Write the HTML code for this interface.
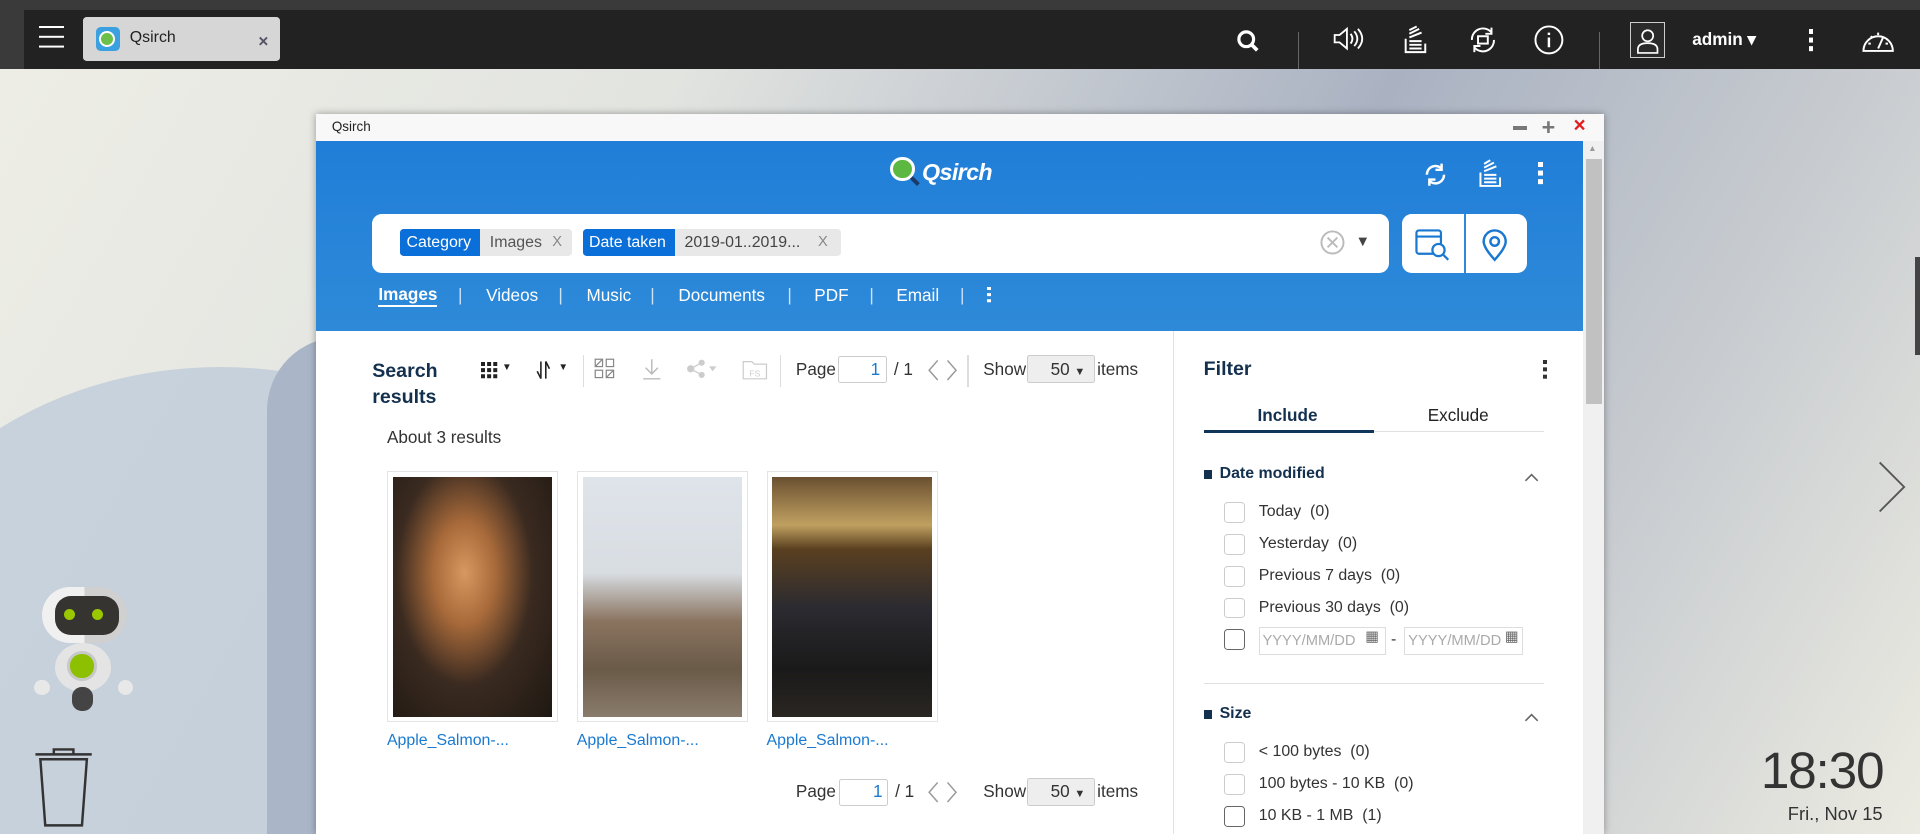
<!DOCTYPE html>
<html><head><meta charset="utf-8"><style>
*{box-sizing:border-box;margin:0;padding:0}
html,body{width:1920px;height:834px;overflow:hidden;font-family:"Liberation Sans",Arial,sans-serif}
#w{zoom:1.22449;width:1568px;height:681px;position:relative;overflow:hidden;
background:linear-gradient(120deg,#eeeee6 0%,#e2e4e0 30%,#aab2c2 60%,#c8ccd0 80%,#ecebe2 100%)}
.a{position:absolute}
.t{position:absolute;white-space:nowrap}
.ic{position:absolute}
</style></head><body><div id="w">
<div class="a" style="left:-120px;top:300px;width:600px;height:500px;border-radius:50%;background:#b9c8d8;opacity:.7"></div>
<div class="a" style="left:218px;top:275px;width:120px;height:406px;border-radius:60px 0 0 0;background:#aab6c8"></div>
<div class="a" style="left:0;top:0;width:1568px;height:8px;background:#3a3a3a"></div>
<div class="a" style="left:0;top:8px;width:1568px;height:48px;background:#222"></div>
<div class="a" style="left:0;top:8px;width:20px;height:48px;background:#3a3a3a"></div>
<div class="a" style="left:32px;top:21px;width:20px;height:2px;background:#fff;box-shadow:0 8px 0 #fff,0 16px 0 #fff"></div>
<div class="a" style="left:68px;top:14px;width:161px;height:36px;background:#d6d6d6;border-radius:3px"></div>
<div class="a" style="left:78px;top:22px;width:20px;height:20px;border-radius:4px;background:#3aa0e0"></div>
<div class="a" style="left:81px;top:25px;width:13px;height:13px;border-radius:50%;background:#6cc04a;border:2px solid #fff"></div>
<div class="t" style="left:106px;top:24px;font-size:13px;color:#222">Qsirch</div>
<div class="t" style="left:211px;top:25px;font-size:14px;color:#556;font-weight:bold">×</div>
<svg class="ic" style="left:1008px;top:22px" width="22" height="22" viewBox="0 0 22 22"><circle cx="10" cy="10" r="6" fill="none" stroke="#fff" stroke-width="2.6"/><path d="M14 14l5 5" stroke="#fff" stroke-width="3"/></svg>
<div class="a" style="left:1060px;top:26px;width:1px;height:30px;background:#666"></div>
<svg class="ic" style="left:1087px;top:20px" width="28" height="24" viewBox="0 0 28 24" fill="none" stroke="#fff" stroke-width="1.5"><path d="M3 9h4l6-5v16l-6-5H3z"/><path d="M16 8q3 4 0 8M19 6q5 6 0 12M22 4q7 8 0 16"/></svg>
<svg class="ic" style="left:1145px;top:20px" width="22" height="26" viewBox="0 0 22 26" fill="none" stroke="#fff" stroke-width="1.6"><path d="M3 12v11h16v-7M6 14h10M6 17h10M6 20h10M6 11l10-4M6 8l8-4M6 5l6-3"/></svg>
<svg class="ic" style="left:1198px;top:20px" width="26" height="26" viewBox="0 0 26 26" fill="none" stroke="#fff" stroke-width="1.6"><path d="M4 13a9 9 0 0 1 16-6M22 13a9 9 0 0 1-16 6"/><path d="M20 3v5h-5M6 23v-5h5"/><rect x="9" y="10" width="8" height="6"/></svg>
<svg class="ic" style="left:1252px;top:20px" width="26" height="26" viewBox="0 0 26 26" fill="none" stroke="#fff" stroke-width="1.6"><circle cx="13" cy="13" r="11"/><path d="M13 11v8M13 7v2" stroke-width="2"/></svg>
<div class="a" style="left:1306px;top:26px;width:1px;height:30px;background:#666"></div>
<div class="a" style="left:1331px;top:18px;width:29px;height:29px;border:1.5px solid #ccc;background:#2a2a2a"></div>
<svg class="ic" style="left:1334px;top:21px" width="24" height="24" viewBox="0 0 24 24" fill="none" stroke="#fff" stroke-width="1.4"><circle cx="12" cy="8" r="4.5"/><path d="M4 22v-3q0-5 8-5t8 5v3z"/></svg>
<div class="t" style="left:1382px;top:24px;font-size:14px;font-weight:bold;color:#fff">admin ▾</div>
<div class="a" style="left:1477px;top:24px;width:4px;height:4px;background:#fff;box-shadow:0 7px 0 #fff,0 14px 0 #fff"></div>
<svg class="ic" style="left:1520px;top:20px" width="28" height="26" viewBox="0 0 28 26" fill="none" stroke="#fff" stroke-width="1.6"><path d="M2 22a12 12 0 1 1 24 0z"/><path d="M14 20l4-9M6 16h2M20 16h2M8 10l1 1M14 7v2"/></svg>
<!-- window -->
<div class="a" style="left:258px;top:93px;width:1052px;height:588px;background:#fff;box-shadow:0 0 6px rgba(0,0,0,.35)"></div>
<div class="a" style="left:258px;top:93px;width:1052px;height:22px;background:#f8f8f8"></div>
<div class="t" style="left:271px;top:97px;font-size:11px;color:#222">Qsirch</div>
<div class="a" style="left:1236px;top:103px;width:11px;height:3px;background:#777"></div>
<div class="t" style="left:1259px;top:93px;font-size:19px;font-weight:bold;color:#777">+</div>
<div class="t" style="left:1285px;top:93px;font-size:17px;font-weight:bold;color:#e02020">×</div>
<div class="a" style="left:258px;top:115px;width:1035px;height:155px;background:linear-gradient(#207ed8,#2e8ad8)"></div>
<div class="a" style="left:1293px;top:115px;width:17px;height:566px;background:#f0f0f0"></div>
<div class="a" style="left:1295px;top:130px;width:13px;height:200px;background:#c1c1c1"></div>
<div class="t" style="left:1297px;top:117px;font-size:7px;color:#999">▲</div>
<div class="a" style="left:727px;top:128px;width:20px;height:20px;border-radius:50%;background:#5cb840;border:3px solid #fff"></div>
<div class="a" style="left:743px;top:146px;width:8px;height:3px;background:#1b3a6a;transform:rotate(45deg)"></div>
<div class="t" style="left:753px;top:130px;font-size:19px;font-weight:bold;font-style:italic;color:#fff;letter-spacing:-0.5px">Qsirch</div>
<svg class="ic" style="left:1161px;top:131px" width="22" height="24" viewBox="0 0 22 24" fill="none" stroke="#fff" stroke-width="2"><path d="M4 12a7 7 0 0 1 12-5M18 12a7 7 0 0 1-12 5"/><path d="M16 3v5h-5M6 21v-5h5"/></svg>
<svg class="ic" style="left:1207px;top:130px" width="20" height="24" viewBox="0 0 20 24" fill="none" stroke="#fff" stroke-width="1.6"><path d="M2 11v11h16v-7M5 13h10M5 16h10M5 19h10M5 10l10-4M5 7l8-4M5 4l5-3"/></svg>
<div class="a" style="left:1256px;top:132px;width:4px;height:4px;background:#fff;box-shadow:0 7px 0 #fff,0 14px 0 #fff"></div>
<div class="a" style="left:304px;top:175px;width:830px;height:48px;background:#fff;border-radius:8px"></div>
<div class="a" style="left:327px;top:187px;width:140px;height:22px;background:#e8e8e8;border-radius:3px"></div>
<div class="a" style="left:327px;top:187px;width:65px;height:22px;background:#0a6fd8;border-radius:3px 0 0 3px"></div>
<div class="t" style="left:332px;top:191px;font-size:13px;color:#fff">Category</div>
<div class="t" style="left:400px;top:191px;font-size:13px;color:#555">Images</div>
<div class="t" style="left:451px;top:191px;font-size:12px;color:#888">X</div>
<div class="a" style="left:476px;top:187px;width:211px;height:22px;background:#e8e8e8;border-radius:3px"></div>
<div class="a" style="left:476px;top:187px;width:75px;height:22px;background:#0a6fd8;border-radius:3px 0 0 3px"></div>
<div class="t" style="left:481px;top:191px;font-size:13px;color:#fff">Date taken</div>
<div class="t" style="left:559px;top:191px;font-size:13px;color:#444">2019-01..2019...</div>
<div class="t" style="left:668px;top:191px;font-size:12px;color:#888">X</div>
<svg class="ic" style="left:1077px;top:187px" width="22" height="22" viewBox="0 0 22 22" fill="none" stroke="#bbb" stroke-width="1.6"><circle cx="11" cy="11" r="9"/><path d="M7 7l8 8M15 7l-8 8"/></svg>
<div class="t" style="left:1107px;top:191px;font-size:12px;color:#444">▼</div>
<div class="a" style="left:1145px;top:175px;width:102px;height:48px;background:#fff;border-radius:8px"></div>
<div class="a" style="left:1196px;top:175px;width:1px;height:48px;background:#2e8ad8"></div>
<svg class="ic" style="left:1155px;top:186px" width="30" height="28" viewBox="0 0 30 28" fill="none" stroke="#1a78d0" stroke-width="1.8"><rect x="2" y="2" width="20" height="19" rx="2"/><path d="M2 7h20"/><circle cx="20" cy="18" r="5" fill="#fff"/><path d="M24 22l4 4"/></svg>
<svg class="ic" style="left:1209px;top:186px" width="24" height="28" viewBox="0 0 24 28" fill="none" stroke="#1a78d0" stroke-width="2"><path d="M12 26Q3 16 3 11a9 9 0 0 1 18 0q0 5-9 15z"/><circle cx="12" cy="11" r="3.5"/></svg>
<div class="t" style="left:309px;top:233px;font-size:14px;font-weight:bold;color:#fff;border-bottom:2px solid #fff;line-height:16px">Images</div>
<div class="t" style="left:374px;top:233px;font-size:14px;color:#cfe3f7">|</div>
<div class="t" style="left:397px;top:233px;font-size:14px;color:#fff">Videos</div>
<div class="t" style="left:456px;top:233px;font-size:14px;color:#cfe3f7">|</div>
<div class="t" style="left:479px;top:233px;font-size:14px;color:#fff">Music</div>
<div class="t" style="left:531px;top:233px;font-size:14px;color:#cfe3f7">|</div>
<div class="t" style="left:554px;top:233px;font-size:14px;color:#fff">Documents</div>
<div class="t" style="left:643px;top:233px;font-size:14px;color:#cfe3f7">|</div>
<div class="t" style="left:665px;top:233px;font-size:14px;color:#fff">PDF</div>
<div class="t" style="left:710px;top:233px;font-size:14px;color:#cfe3f7">|</div>
<div class="t" style="left:732px;top:233px;font-size:14px;color:#fff">Email</div>
<div class="t" style="left:784px;top:233px;font-size:14px;color:#cfe3f7">|</div>
<div class="a" style="left:806px;top:234px;width:3px;height:3px;background:#fff;box-shadow:0 5px 0 #fff,0 10px 0 #fff"></div>
<div class="a" style="left:958px;top:270px;width:1px;height:411px;background:#e2e2e2"></div>
<div class="t" style="left:304px;top:292px;font-size:16px;font-weight:bold;color:#14304f;line-height:22px">Search<br>results</div>
<div class="a" style="left:393px;top:296px;width:3px;height:3px;background:#222;box-shadow:5px 0 #222,10px 0 #222,0 5px #222,5px 5px #222,10px 5px #222,0 10px #222,5px 10px #222,10px 10px #222"></div>
<div class="t" style="left:410px;top:296px;font-size:8px;color:#222">▼</div>
<svg class="ic" style="left:438px;top:293px" width="16" height="18" viewBox="0 0 16 18" fill="none" stroke="#222" stroke-width="1.3"><path d="M1 10l3 6V2M8 16V2l3 6"/></svg>
<div class="t" style="left:456px;top:296px;font-size:8px;color:#222">▼</div>
<div class="a" style="left:476px;top:290px;width:1px;height:26px;background:#ddd"></div>
<svg class="ic" style="left:485px;top:292px" width="18" height="18" viewBox="0 0 18 18" fill="none" stroke="#888" stroke-width="1"><rect x="1" y="1" width="6" height="6"/><rect x="10" y="1" width="6" height="6"/><rect x="1" y="10" width="6" height="6"/><rect x="10" y="10" width="6" height="6"/><path d="M1 7l6-6M10 16l6-6"/></svg>
<svg class="ic" style="left:524px;top:292px" width="16" height="18" viewBox="0 0 16 18" fill="none" stroke="#bbb" stroke-width="1.2"><path d="M8 1v12M3 8l5 5 5-5M1 17h14"/></svg>
<svg class="ic" style="left:561px;top:293px" width="26" height="16" viewBox="0 0 26 16" fill="#ccc"><circle cx="3" cy="8" r="3"/><circle cx="12" cy="3" r="2.5"/><circle cx="12" cy="13" r="2.5"/><path d="M3 8L12 3M3 8l9 5" stroke="#ccc"/><path d="M18 6h6l-3 4z"/></svg>
<svg class="ic" style="left:606px;top:292px" width="22" height="18" viewBox="0 0 22 18" fill="none" stroke="#ccc" stroke-width="1"><path d="M1 3h7l2 2h10v12H1z"/><text x="6" y="15" font-size="7" fill="#ccc" stroke="none" font-family="Liberation Sans">FS</text></svg>
<div class="a" style="left:637px;top:290px;width:1px;height:26px;background:#ddd"></div>
<div class="t" style="left:650px;top:293px;font-size:14px;color:#333">Page</div>
<div class="a" style="left:684px;top:291px;width:40px;height:22px;border:1px solid #ccc;border-radius:2px"></div>
<div class="t" style="left:711px;top:293px;font-size:14px;color:#1a7ad0">1</div>
<div class="t" style="left:730px;top:293px;font-size:14px;color:#333">/ 1</div>
<svg class="ic" style="left:754px;top:292px" width="32" height="20" viewBox="0 0 32 20" fill="none" stroke="#999" stroke-width="1.2"><path d="M12 2L5 10l7 8M20 2l7 8-7 8"/></svg>
<div class="a" style="left:790px;top:290px;width:1px;height:26px;background:#ddd"></div>
<div class="t" style="left:803px;top:293px;font-size:14px;color:#333">Show</div>
<div class="a" style="left:839px;top:290px;width:55px;height:23px;background:#eee;border:1px solid #ccc;border-radius:2px"></div>
<div class="t" style="left:858px;top:293px;font-size:14px;color:#333">50 <span style="font-size:9px">▼</span></div>
<div class="t" style="left:896px;top:293px;font-size:14px;color:#333">items</div>
<div class="t" style="left:316px;top:349px;font-size:14px;color:#333">About 3 results</div>
<div class="a" style="left:316px;top:385px;width:140px;height:205px;border:1px solid #e4e4e4;padding:4px">
<div style="width:100%;height:100%;background:radial-gradient(ellipse at 45% 40%,#d89860 0%,#a86a3a 25%,#3a2a20 55%,#1e1812 100%)"></div></div>
<div class="a" style="left:471px;top:385px;width:140px;height:205px;border:1px solid #e4e4e4;padding:4px">
<div style="width:100%;height:100%;background:linear-gradient(#dfe4ea 0%,#d8dde2 40%,#8a7460 60%,#6a5a48 80%,#8a7c6c 100%)"></div></div>
<div class="a" style="left:626px;top:385px;width:140px;height:205px;border:1px solid #e4e4e4;padding:4px">
<div style="width:100%;height:100%;background:linear-gradient(#6a5030 0%,#c0a060 20%,#5a4020 30%,#2a2a30 55%,#1a1a1a 80%,#2a2622 100%)"></div></div>
<div class="t" style="left:316px;top:598px;font-size:13px;color:#1a7ad0">Apple_Salmon-...</div>
<div class="t" style="left:471px;top:598px;font-size:13px;color:#1a7ad0">Apple_Salmon-...</div>
<div class="t" style="left:626px;top:598px;font-size:13px;color:#1a7ad0">Apple_Salmon-...</div>
<div class="t" style="left:650px;top:638px;font-size:14px;color:#333">Page</div>
<div class="a" style="left:685px;top:636px;width:40px;height:22px;border:1px solid #ccc;border-radius:2px"></div>
<div class="t" style="left:713px;top:638px;font-size:14px;color:#1a7ad0">1</div>
<div class="t" style="left:731px;top:638px;font-size:14px;color:#333">/ 1</div>
<svg class="ic" style="left:754px;top:637px" width="32" height="20" viewBox="0 0 32 20" fill="none" stroke="#999" stroke-width="1.2"><path d="M12 2L5 10l7 8M20 2l7 8-7 8"/></svg>
<div class="t" style="left:803px;top:638px;font-size:14px;color:#333">Show</div>
<div class="a" style="left:839px;top:635px;width:55px;height:23px;background:#eee;border:1px solid #ccc;border-radius:2px"></div>
<div class="t" style="left:858px;top:638px;font-size:14px;color:#333">50 <span style="font-size:9px">▼</span></div>
<div class="t" style="left:896px;top:638px;font-size:14px;color:#333">items</div>
<div class="t" style="left:983px;top:292px;font-size:16px;font-weight:bold;color:#14304f">Filter</div>
<div class="a" style="left:1260px;top:294px;width:3px;height:3px;background:#333;box-shadow:0 6px 0 #333,0 12px 0 #333"></div>
<div class="t" style="left:1027px;top:331px;font-size:14px;font-weight:bold;color:#14304f">Include</div>
<div class="t" style="left:1166px;top:331px;font-size:14px;color:#222">Exclude</div>
<div class="a" style="left:983px;top:352px;width:278px;height:1px;background:#e0e0e0"></div>
<div class="a" style="left:983px;top:351px;width:139px;height:3px;background:#0f3558"></div>
<div class="a" style="left:983px;top:384px;width:7px;height:7px;background:#14304f"></div>
<div class="t" style="left:996px;top:380px;font-size:13px;font-weight:bold;color:#14304f">Date modified</div>
<svg class="ic" style="left:1244px;top:385px" width="14" height="10" viewBox="0 0 14 10" fill="none" stroke="#666" stroke-width="1.3"><path d="M2 8l5-5 5 5"/></svg>
<div class="a" style="left:1000px;top:410px;width:17px;height:17px;border:1px solid #ccc;border-radius:3px"></div>
<div class="t" style="left:1028px;top:411px;font-size:13px;color:#333">Today&nbsp; (0)</div>
<div class="a" style="left:1000px;top:436px;width:17px;height:17px;border:1px solid #ccc;border-radius:3px"></div>
<div class="t" style="left:1028px;top:437px;font-size:13px;color:#333">Yesterday&nbsp; (0)</div>
<div class="a" style="left:1000px;top:462px;width:17px;height:17px;border:1px solid #ccc;border-radius:3px"></div>
<div class="t" style="left:1028px;top:463px;font-size:13px;color:#333">Previous 7 days&nbsp; (0)</div>
<div class="a" style="left:1000px;top:488px;width:17px;height:17px;border:1px solid #ccc;border-radius:3px"></div>
<div class="t" style="left:1028px;top:489px;font-size:13px;color:#333">Previous 30 days&nbsp; (0)</div>
<div class="a" style="left:1000px;top:514px;width:17px;height:17px;border:1.5px solid #666;border-radius:3px"></div>
<div class="a" style="left:1028px;top:512px;width:104px;height:23px;border:1px solid #ddd"></div>
<div class="t" style="left:1031px;top:517px;font-size:12px;color:#aaa">YYYY/MM/DD</div>
<div class="t" style="left:1115px;top:513px;font-size:12px;color:#666">▦</div>
<div class="t" style="left:1136px;top:515px;font-size:13px;color:#333">-</div>
<div class="a" style="left:1147px;top:512px;width:97px;height:23px;border:1px solid #ddd"></div>
<div class="t" style="left:1150px;top:517px;font-size:12px;color:#aaa">YYYY/MM/DD</div>
<div class="t" style="left:1229px;top:513px;font-size:12px;color:#666">▦</div>
<div class="a" style="left:983px;top:558px;width:278px;height:1px;background:#e0e0e0"></div>
<div class="a" style="left:983px;top:580px;width:7px;height:7px;background:#14304f"></div>
<div class="t" style="left:996px;top:576px;font-size:13px;font-weight:bold;color:#14304f">Size</div>
<svg class="ic" style="left:1244px;top:581px" width="14" height="10" viewBox="0 0 14 10" fill="none" stroke="#666" stroke-width="1.3"><path d="M2 8l5-5 5 5"/></svg>
<div class="a" style="left:1000px;top:606px;width:17px;height:17px;border:1px solid #ccc;border-radius:3px"></div>
<div class="t" style="left:1028px;top:607px;font-size:13px;color:#333">&lt; 100 bytes&nbsp; (0)</div>
<div class="a" style="left:1000px;top:632px;width:17px;height:17px;border:1px solid #ccc;border-radius:3px"></div>
<div class="t" style="left:1028px;top:633px;font-size:13px;color:#333">100 bytes - 10 KB&nbsp; (0)</div>
<div class="a" style="left:1000px;top:658px;width:17px;height:17px;border:1.5px solid #666;border-radius:3px"></div>
<div class="t" style="left:1028px;top:659px;font-size:13px;color:#333">10 KB - 1 MB&nbsp; (1)</div>
<svg class="ic" style="left:1532px;top:376px" width="28" height="44" viewBox="0 0 28 44" fill="none" stroke="#555" stroke-width="1.5"><path d="M3 2l20 20-20 20"/></svg>
<div class="a" style="left:1564px;top:210px;width:4px;height:80px;background:#444"></div>
<div class="t" style="left:1438px;top:604px;font-size:42px;color:#333;font-weight:300;letter-spacing:-1px">18:30</div>
<div class="t" style="left:1460px;top:656px;font-size:15px;color:#333">Fri., Nov 15</div>
<div class="a" style="left:34px;top:479px;width:70px;height:46px;border-radius:23px;background:linear-gradient(90deg,#f0f0f0 50%,#d0d0d0 50%)"></div>
<div class="a" style="left:45px;top:487px;width:52px;height:32px;border-radius:13px;background:#363431"></div>
<div class="a" style="left:52px;top:497px;width:9px;height:9px;border-radius:50%;background:#9ac800"></div>
<div class="a" style="left:75px;top:497px;width:9px;height:9px;border-radius:50%;background:#9ac800"></div>
<div class="a" style="left:45px;top:525px;width:46px;height:40px;border-radius:50%;background:#e4e4e4"></div>
<div class="a" style="left:55px;top:532px;width:24px;height:24px;border-radius:50%;background:#8cc000;border:3px solid #c8c8c8"></div>
<div class="a" style="left:59px;top:561px;width:17px;height:20px;border-radius:8px;background:#444"></div>
<div class="a" style="left:28px;top:555px;width:13px;height:13px;border-radius:50%;background:#e8e8e8"></div>
<div class="a" style="left:96px;top:555px;width:13px;height:13px;border-radius:50%;background:#e8e8e8"></div>
<svg class="ic" style="left:27px;top:610px" width="50" height="66" viewBox="0 0 50 66" fill="none" stroke="#333" stroke-width="2"><path d="M2 6h46M17 6V2h16v4M6 10l4 54h30l4-54z"/></svg>
</div></body></html>
